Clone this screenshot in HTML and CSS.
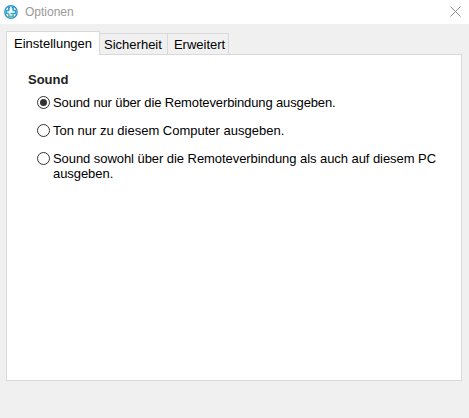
FILE: index.html
```
<!DOCTYPE html>
<html lang="de">
<head>
<meta charset="utf-8">
<title>Optionen</title>
<link rel="stylesheet" href="styles.css">
</head>
<body>
<div class="window">
  <header class="titlebar">
    <svg class="app-icon" width="16" height="16" viewBox="0 0 16 16">
      <circle cx="8" cy="8" r="6.2" fill="#fff" stroke="#2f93cc" stroke-width="1.4"/>
      <path d="M7.2 3.8H5.8v2.6H3.4v3h2.4" fill="none" stroke="#2f9fd0" stroke-width="1.5"/>
      <path d="M8.6 3.8h1.6v2.6h2.4v3H7.5" fill="none" stroke="#2f9fd0" stroke-width="1.5"/>
      <path d="M10.2 9.4v2.8H5.8V9.4" fill="none" stroke="#58b7a0" stroke-width="1.5"/>
    </svg>
    <span class="title">Optionen</span>
    <svg class="close" width="11" height="11" viewBox="0 0 11 11">
      <path d="M0.5 0.5l10 10M10.5 0.5l-10 10" stroke="#8a8a8a" stroke-width="1" fill="none"/>
    </svg>
  </header>
  <main class="content">
    <nav class="tabs">
      <div class="tab active">Einstellungen</div>
      <div class="tab">Sicherheit</div>
      <div class="tab">Erweitert</div>
    </nav>
    <section class="panel">
      <h2 class="group">Sound</h2>
      <div class="options">
        <label class="option tight"><span class="radio checked"></span><span>Sound nur über die Remoteverbindung ausgeben.</span></label>
        <label class="option"><span class="radio"></span><span>Ton nur zu diesem Computer ausgeben.</span></label>
        <label class="option snug"><span class="radio"></span><span>Sound sowohl über die Remoteverbindung als auch auf diesem PC ausgeben.</span></label>
      </div>
    </section>
  </main>
</div>
</body>
</html>
```
FILE: styles.css
```
* { box-sizing: border-box; }
html, body { margin: 0; padding: 0; }
body {
  width: 469px;
  height: 418px;
  overflow: hidden;
  background: #f0f0f0;
  font-family: "Liberation Sans", Arial, sans-serif;
  font-size: 13px;
  color: #000;
}
.window { display: flex; flex-direction: column; height: 418px; }
.titlebar {
  height: 24px;
  background: #fff;
  display: flex;
  align-items: center;
  padding: 0 8px 1px 3px;
}
.app-icon { flex: none; }
.title { margin-left: 6px; color: #9a9a9a; font-size: 12px; flex: 1; }
.close { flex: none; }
.content {
  flex: 1;
  padding: 7px 7px 37px 6px;
  display: flex;
  flex-direction: column;
}
.tabs { display: flex; align-items: flex-end; height: 24px; position: relative; z-index: 1; margin-bottom: -1px; }
.tab {
  height: 22px;
  line-height: 22px;
  padding: 0 5px 0 4px;
  background: #f0f0f0;
  border: 1px solid #d9d9d9;
  border-left: 0;
  white-space: nowrap;
}
.tab:last-child { padding: 0 3px 0 6px; }
.tab.active {
  height: 24px;
  line-height: 23px;
  padding: 0 7px;
  background: #fff;
  border-left: 1px solid #d9d9d9;
  border-bottom: 0;
}
.panel {
  flex: 1;
  background: #fff;
  border: 1px solid #d9d9d9;
  padding: 17px 21px;
}
.group { margin: 0 0 7px; font-size: 13px; line-height: 16px; font-weight: 700; color: #222; }
.options { display: flex; flex-direction: column; gap: 13px; padding-left: 9px; }
.option { display: flex; align-items: flex-start; gap: 3px; line-height: 15px; width: 408px; }
.option.tight { letter-spacing: -0.13px; }
.option.snug { letter-spacing: -0.06px; }
.radio {
  flex: none;
  width: 13px;
  height: 13px;
  margin-top: 1px;
  border: 1px solid #333;
  border-radius: 50%;
  background: #fff;
  position: relative;
}
.radio.checked::after {
  content: "";
  position: absolute;
  left: 2px;
  top: 2px;
  width: 7px;
  height: 7px;
  border-radius: 50%;
  background: #333;
}
```
